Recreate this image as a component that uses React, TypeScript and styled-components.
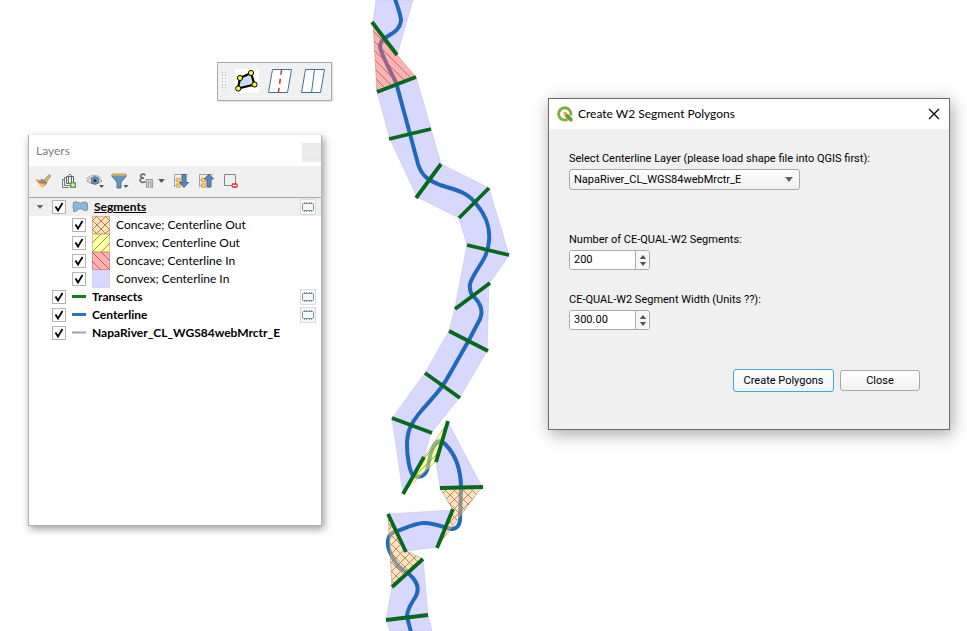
import React, { useId, useState } from "react";
import styled, { createGlobalStyle } from "styled-components";

const GlobalStyle = createGlobalStyle`
  *, *::before, *::after { box-sizing: border-box; }
  body { margin: 0; background: #fff; }
  button, input, select { font: inherit; color: inherit; margin: 0; }
`;

const Desktop = styled.main`
  position: relative;
  min-height: 100vh;
  overflow: hidden;
  color: #000;
  font: 12px/18px Lato, "Open Sans", sans-serif;
`;

const MapCanvas = styled.svg`
  position: absolute;
  inset: 0;
  width: 100%;
  height: 100%;
`;

/* Floating tool bar */
const FloatingToolbar = styled.div`
  position: absolute;
  left: 217px;
  top: 62px;
  display: flex;
  align-items: center;
  gap: 6px;
  height: 39px;
  padding: 0 5px 2px 3px;
  border: 1px solid #a9a9a9;
  background: #f0f0f0;
  box-shadow: 1px 1px 2px #ddd;
`;

const ToolButton = styled.button<{ $size?: number }>`
  display: grid;
  place-items: center;
  width: ${(p) => p.$size ?? 27}px;
  height: ${(p) => p.$size ?? 27}px;
  padding: 0;
  border: 0;
  background: transparent;
`;

const Icon = styled.svg`
  display: block;
`;

/* Layers panel */
const LayersPanel = styled.section`
  position: absolute;
  left: 28px;
  top: 135px;
  width: 294px;
  min-height: 391px;
  display: flex;
  flex-direction: column;
  background: #fff;
  border: 1px solid #b4b4b4;
  border-top: 0;
  box-shadow: 2px 3px 8px rgba(0, 0, 0, 0.4);
`;

const PanelHeader = styled.header`
  display: flex;
  align-items: center;
  justify-content: space-between;
  height: 31px;
  padding-left: 7px;
`;

const PanelTitle = styled.h2`
  margin: 0;
  font-size: 12px;
  font-weight: 400;
  color: #7d7d7d;
`;

const PanelClose = styled.button`
  align-self: flex-end;
  display: grid;
  place-items: center;
  width: 19px;
  height: 19px;
  margin-bottom: 4px;
  padding: 0;
  border: 0;
  background: #ebebeb;
`;

const LayerTools = styled.div`
  display: flex;
  align-items: center;
  gap: 5px;
  height: 31px;
  padding: 0 0 2px 4px;
  background: #f0f0f0;
`;

const ToolGroup = styled.div`
  display: flex;
  align-items: center;
`;

const MenuArrow = styled.button`
  display: grid;
  place-items: center;
  width: 9px;
  height: 20px;
  padding: 0;
  border: 0;
  background: transparent;
`;

const Tree = styled.ul`
  flex: 1;
  margin: 0;
  padding: 0;
  list-style: none;
  border-top: 1px solid #a8a8a8;
`;

const LayerRow = styled.li<{ $level?: number; $active?: boolean }>`
  display: flex;
  align-items: center;
  height: 18px;
  padding-left: ${(p) => (p.$level ? 26 : 6)}px;
  padding-right: 5px;
  background: ${(p) => (p.$active ? "#efefef" : "transparent")};
`;

const Expander = styled.button`
  display: grid;
  place-items: center;
  width: 10px;
  height: 18px;
  padding: 0;
  border: 0;
  background: transparent;
`;

const ExpanderSpace = styled.span`
  width: 10px;
`;

const LayerLabel = styled.label<{ $bold?: boolean; $underline?: boolean }>`
  display: flex;
  flex: 1;
  align-items: center;
  margin-left: 7px;
  line-height: 20px;
  white-space: nowrap;
  font-weight: ${(p) => (p.$bold ? 700 : 400)};
  text-decoration: ${(p) => (p.$underline ? "underline" : "none")};
`;

const CheckWrap = styled.span`
  display: grid;
  margin-right: 6px;

  > * { grid-area: 1 / 1; }
`;

const CheckInput = styled.input`
  appearance: none;
  width: 14px;
  height: 14px;
  border: 1px solid #b4b4b4;
  background: #fff;
`;

const CheckMark = styled(Icon)`
  z-index: 1;
  pointer-events: none;
`;

const Symbol = styled.span<{ $gap: number }>`
  display: block;
  margin-right: ${(p) => p.$gap}px;
`;

const MemoryBadge = styled.span`
  display: grid;
  place-items: center;
  width: 16px;
  height: 16px;
  border: 1px solid #dcdcdc;
  background: #f7f7f7;
`;

/* Dialog */
const Dialog = styled.section`
  position: absolute;
  left: 548px;
  top: 98px;
  width: 402px;
  min-height: 332px;
  border: 1px solid #6b6b6b;
  background: #f0f0f0;
  box-shadow: 2px 4px 16px rgba(0, 0, 0, 0.36);
`;

const TitleBar = styled.header`
  display: flex;
  align-items: center;
  gap: 5px;
  height: 30px;
  padding: 0 9px 0 8px;
  background: #fff;
`;

const DialogTitle = styled.h1`
  flex: 1;
  margin: 0;
  font-size: 12px;
  font-weight: 400;
`;

const DialogForm = styled.form`
  display: flex;
  flex-direction: column;
  gap: 21px;
  padding: 21px 29px 0 20px;
  font: 11px/18px Roboto, "Liberation Sans", sans-serif;
`;

const Field = styled.div<{ $spaced?: boolean }>`
  display: flex;
  flex-direction: column;
  align-items: flex-start;
  gap: 1px;
  margin-bottom: ${(p) => (p.$spaced ? 20 : 0)}px;
`;

const FieldLabel = styled.label`
  white-space: nowrap;
`;

const SelectWrap = styled.div`
  display: grid;
  align-items: center;

  > * { grid-area: 1 / 1; }
`;

const LayerSelect = styled.select`
  appearance: none;
  width: 231px;
  height: 21px;
  padding: 0 20px 0 4px;
  border: 1px solid #a9a9a9;
  border-radius: 3px;
  background: linear-gradient(#fefefe, #f0f0f0);
`;

const SelectArrow = styled(Icon)`
  justify-self: end;
  margin-right: 7px;
  pointer-events: none;
`;

const SpinBox = styled.div`
  display: flex;
  width: 81px;
  height: 20px;
  border: 1px solid #a9a9a9;
  border-radius: 3px;
  background: #fff;
  overflow: hidden;
`;

const SpinInput = styled.input`
  flex: 1;
  min-width: 0;
  padding: 0 4px;
  border: 0;
  background: #fff;
  outline: 0;
`;

const SpinButtons = styled.div`
  display: flex;
  flex-direction: column;
  width: 14px;
  padding: 2px 0;
  border-left: 1px solid #a9a9a9;
  background: #f6f6f6;
`;

const SpinButton = styled.button`
  display: grid;
  flex: 1;
  place-items: center;
  padding: 0;
  border: 0;
  background: transparent;
`;

const Actions = styled.div`
  display: flex;
  justify-content: flex-end;
  align-items: center;
  gap: 6px;
  margin-top: 18px;
`;

const ActionButton = styled.button<{ $primary?: boolean }>`
  width: ${(p) => (p.$primary ? 101 : 80)}px;
  height: ${(p) => (p.$primary ? 23 : 21)}px;
  padding: 0;
  border: 1px solid ${(p) => (p.$primary ? "#45a5e2" : "#a9a9a9")};
  border-radius: 3px;
  background: linear-gradient(#fff, ${(p) => (p.$primary ? "#edf4fa" : "#f0f0f0")});
`;

/* Map data */
const plainPolygons = [
  "376,0 413,0 397,55 373,22",
  "377,92 416,77 431,129 390,139",
  "390,139 431,129 441,164 417,197",
  "417,197 441,164 489,188 459,218",
  "459,218 489,188 509,255 467,245",
  "467,245 509,255 489,284 455,308",
  "455,308 489,284 487,351 449,331",
  "449,331 487,351 460,397 425,373",
  "425,373 460,397 431,433 392,418",
  "392,418 431,433 424,457 403,493",
  "448,422 482,487 440,488 436,461",
  "453,510 388,514 406,551 437,547",
  "392,587 423,559 428,615 386,620",
  "386,620 428,615 432,631 390,631",
];

const hatchedPolygons = [
  { points: "373,22 397,55 416,77 377,92", fill: "#ff6464", hatch: "hatch-red" },
  { points: "403,493 436,461 448,422 424,457", fill: "#ffff50", hatch: "hatch-yellow" },
  { points: "440,488 482,487 437,547 453,510", fill: "#ffc678", hatch: "hatch-orange" },
  { points: "388,514 406,551 423,559 392,587", fill: "#ffc678", hatch: "hatch-orange" },
];

const transects = [
  "M372,22 397,55", "M377,92 416,77", "M389,139 431,129", "M416,198 441,164",
  "M459,218 489,188", "M467,245 509,255", "M490,283 455,309", "M449,331 488,351",
  "M425,373 460,398", "M392,418 432,433", "M403,494 424,457", "M436,462 448,421",
  "M440,488 483,487", "M437,548 453,509", "M388,514 406,552", "M392,587 423,559",
  "M386,620 428,615",
];

const centerline =
  "M395,-1 C398,8 401,15 401,21 C399,33 388,34 382,41 C378,46 381,50 384,58 C392,76 396,80 397,86 " +
  "L410,134 L418,164 C422,177 430,181 440,185 C455,190 467,191 477,205 C488,218 490,232 489,241 " +
  "C488,260 474,270 470,284 C469,292 472,296 476,299 C482,306 483,312 480,319 L469,340 L452,370 " +
  "C443,387 438,392 422,410 C410,424 407,432 407,445 C407,455 409,468 412,474 C415,478 424,478 427,470 " +
  "C430,460 429,454 434,446 C437,440 441,440 445,444 C455,454 461,470 461,488 L460,520 " +
  "C459,529 453,530 447,528 C438,525 432,523 424,523 C413,523 400,531 394,532 C386,536 387,546 390,552 " +
  "C396,566 402,570 409,574 C417,581 420,588 416,596 C411,604 407,610 407,617 L411,632";

function RiverMap() {
  return (
    <MapCanvas viewBox="0 0 967 631" preserveAspectRatio="xMidYMid slice" role="img" aria-label="River segments map">
      <defs>
        <pattern id="hatch-red" width="9" height="9" patternUnits="userSpaceOnUse">
          <path d="M-1,-1 10,10 M-1,8 1,10 M8,-1 10,1" stroke="#a86060" strokeWidth="0.8" />
        </pattern>
        <pattern id="hatch-yellow" width="9" height="9" patternUnits="userSpaceOnUse">
          <path d="M-1,10 10,-1 M-1,1 1,-1 M8,10 10,8" stroke="#8b9444" strokeWidth="0.8" />
        </pattern>
        <pattern id="hatch-orange" width="9" height="9" patternUnits="userSpaceOnUse">
          <path d="M-1,-1 10,10 M-1,10 10,-1" stroke="#9c7a55" strokeWidth="0.8" />
        </pattern>
      </defs>
      <g fill="#d8d8ff" stroke="#c9c4dc" strokeWidth="0.6">
        {plainPolygons.map((points) => <polygon key={points} points={points} />)}
      </g>
      <path d={centerline} fill="none" stroke="#1f69bd" strokeWidth="4" strokeLinejoin="round" />
      {hatchedPolygons.map(({ points, fill, hatch }) => (
        <g key={points}>
          <polygon points={points} fill={fill} fillOpacity="0.5" stroke="#b09888" strokeWidth="0.6" />
          <polygon points={points} fill={`url(#${hatch})`} />
        </g>
      ))}
      <path d={transects.join(" ")} fill="none" stroke="#056a1e" strokeWidth="3.8" />
    </MapCanvas>
  );
}

const Down = ({ w = 8, h = 5, color = "#555" }: { w?: number; h?: number; color?: string }) => (
  <Icon width={w} height={h} viewBox="0 0 8 5" aria-hidden="true"><path d="M0,0H8L4,5Z" fill={color} /></Icon>
);

const Up = ({ w = 8, h = 5 }: { w?: number; h?: number }) => (
  <Icon width={w} height={h} viewBox="0 0 8 5" aria-hidden="true"><path d="M0,5H8L4,0Z" fill="#555" /></Icon>
);

const Swatch = ({ kind }: { kind: string }) => {
  const styles: Record<string, [string, string, string]> = {
    orange: ["#ffe0b5", "#a8835c", "M0,4 14,18 M4,0 18,14 M0,14 14,0 M4,18 18,4 M0,5 5,0 M13,18 18,13 M0,13 5,18 M13,0 18,5"],
    yellow: ["#ffffa8", "#8e9648", "M0,9 9,0 M0,18 18,0 M9,18 18,9"],
    red: ["#ffb0b0", "#b06464", "M0,0 18,18 M9,0 18,9 M0,9 9,18"],
    lilac: ["#d8d8ff", "none", ""],
  };
  const [fill, line, d] = styles[kind];
  return (
    <Icon width="18" height="18" aria-hidden="true">
      <rect width="18" height="18" fill={fill} />
      <path d={d} stroke={line} />
      <rect x="0.5" y="0.5" width="17" height="17" fill="none" stroke={line === "none" ? "#d0cdf0" : line} strokeOpacity="0.4" />
    </Icon>
  );
};

const LineSymbol = ({ color, width }: { color: string; width: number }) => (
  <Icon width="14" height="18" aria-hidden="true"><path d="M0,8.5H14" stroke={color} strokeWidth={width} /></Icon>
);

const Checkbox = ({ id }: { id: string }) => (
  <CheckWrap>
    <CheckInput type="checkbox" id={id} defaultChecked />
    <CheckMark width="14" height="14" viewBox="0 0 14 14" aria-hidden="true">
      <path d="M3.5,6.5 L6,10.5 L10.5,3" fill="none" stroke="#000" strokeWidth="1.8" />
    </CheckMark>
  </CheckWrap>
);

const Memory = () => (
  <MemoryBadge title="Temporary layer">
    <Icon width="14" height="12" viewBox="0 0 14 12" aria-hidden="true">
      <path d="M3.5,1V11 M5.5,1V11 M8.5,1V11 M10.5,1V11" stroke="#8b98a0" />
      <rect x="1.5" y="2.5" width="11" height="7" rx="1" fill="#f4f8fa" stroke="#78909c" />
    </Icon>
  </MemoryBadge>
);

interface Layer { name: string; level?: number; symbol: React.ReactNode; gap: number; memory?: boolean; active?: boolean }

const layers: Layer[] = [
  {
    name: "Segments", gap: 5, memory: true, active: true,
    symbol: (
      <Icon width="17" height="14" viewBox="0 0 17 14" aria-hidden="true">
        <path d="M1.5,2.5 Q4,1 6,2.5 Q9,4 12,2 Q15,1.5 15.5,4 Q16,7 15,10.5 Q12,11 10,9 Q8,8 6,9.5 Q4,12 1.5,11.5 Q2,9 1,7 Z" fill="#8bb5da" stroke="#6b95b8" />
      </Icon>
    ),
  },
  { name: "Concave; Centerline Out", level: 1, gap: 6, symbol: <Swatch kind="orange" /> },
  { name: "Convex; Centerline Out", level: 1, gap: 6, symbol: <Swatch kind="yellow" /> },
  { name: "Concave; Centerline In", level: 1, gap: 6, symbol: <Swatch kind="red" /> },
  { name: "Convex; Centerline In", level: 1, gap: 6, symbol: <Swatch kind="lilac" /> },
  { name: "Transects", gap: 6, memory: true, symbol: <LineSymbol color="#118014" width={3} /> },
  { name: "Centerline", gap: 6, memory: true, symbol: <LineSymbol color="#2a76b4" width={3} /> },
  { name: "NapaRiver_CL_WGS84webMrctr_E", gap: 6, symbol: <LineSymbol color="#a79fb2" width={2} /> },
];

const treeGlyph = (
  <>
    <path d="M1,1.5H15 M1.5,2V14 M1.5,7H5 M1.5,12.5H5" stroke="#a3a3a3" fill="none" />
    <path d="M4,5.5h3v3h-3z M4,11h3v3h-3z" fill="#fff" stroke="#e8a33c" strokeWidth="1.4" />
  </>
);

function LayersDock() {
  const prefix = useId();
  return (
    <LayersPanel aria-label="Layers">
      <PanelHeader>
        <PanelTitle>Layers</PanelTitle>
        <PanelClose aria-label="Close panel">
          <Icon width="6" height="6" viewBox="0 0 6 6"><path d="M1,1 5,5 M5,1 1,5" stroke="#f6f6f6" /></Icon>
        </PanelClose>
      </PanelHeader>
      <LayerTools>
        <ToolButton $size={20} aria-label="Open styling panel">
          <Icon width="16" height="16" viewBox="0 0 16 16">
            <path d="M8.5,7.5 14,1.5 16,3 11,9.5Z" fill="#d9b06a" stroke="#9d7a43" strokeWidth="0.6" />
            <path d="M6.5,5.5 12.5,9.5 11,11.5 5,7.5Z" fill="#7c8c96" />
            <path d="M1,6.5 5,7.5 11,11.5 7,14.5Z" fill="#e6503e" />
            <path d="M3,10 8,10.5 10,12 7,14.5Z" fill="#f8c843" />
            <path d="M1,6.5 4.5,7 6.5,9 3,9.2Z" fill="#f28b50" />
          </Icon>
        </ToolButton>
        <ToolButton $size={22} aria-label="Add group">
          <Icon width="16" height="16" viewBox="0 0 16 16">
            <path d="M1.5,6.5V14.5H8 M1.5,6.5H3.5 M3.5,4.5V12.5H10 M3.5,4.5H6" fill="none" stroke="#6f7d78" />
            <path d="M5.5,3.5H12.5V10.5H5.5Z M7.5,10V2.5 Q9,-0.5 10.5,2.5V10" fill="none" stroke="#596864" />
            <rect x="9" y="9" width="6" height="6" rx="1" fill="#5ea34f" />
            <path d="M12,10V14 M10,12H14" stroke="#fff" />
          </Icon>
        </ToolButton>
        <ToolButton $size={20} aria-label="Manage map themes">
          <Icon width="20" height="16" viewBox="0 0 20 16">
            <path d="M2,8 Q9,0 17,8 Q10,14 2,8Z" fill="#f4f4f4" stroke="#8b9398" />
            <path d="M1,6 Q9,-1 16,5" fill="none" stroke="#a7a7a7" />
            <circle cx="10" cy="7.5" r="3.8" fill="#6e96ba" stroke="#50708b" />
            <circle cx="10" cy="7.5" r="1.6" fill="#24384a" />
            <path d="M14,12h5l-2.5,3z" fill="#555" />
          </Icon>
        </ToolButton>
        <ToolButton $size={20} aria-label="Filter legend">
          <Icon width="18" height="16" viewBox="0 0 18 16">
            <path d="M1,2 15,2 15,3.5 10,9 10,15 6,15 6,9 1,3.5Z" fill="#6594bc" stroke="#44759c" />
            <path d="M1,1H15V3H1Z" fill="#e8c355" stroke="#93865a" strokeWidth="0.7" />
            <path d="M12.5,12h5l-2.5,3z" fill="#555" />
          </Icon>
        </ToolButton>
        <ToolGroup>
          <ToolButton $size={22} aria-label="Filter legend by expression">
            <Icon width="16" height="16" viewBox="0 0 16 16">
              <path d="M7.5,2 Q4,0 2.5,2.5 Q2.5,5 6,5 Q2,5.2 1.8,7.5 Q3,10.5 7.5,8.8" fill="none" stroke="#6d626f" strokeWidth="1.5" />
              <path d="M8,6.5H14.5V14.5H12.5V9.5H10.5V14.5H8.5Z" fill="#c8c8c8" stroke="#8e8e8e" strokeWidth="0.8" />
            </Icon>
          </ToolButton>
          <MenuArrow aria-label="Expression filter options"><Down w={7} h={4} /></MenuArrow>
        </ToolGroup>
        <ToolButton $size={20} aria-label="Expand all">
          <Icon width="16" height="16" viewBox="0 0 16 16">
            {treeGlyph}
            <path d="M9,1.5H13V9.5H15.5L11,14.5L6.5,9.5H9Z" fill="#5a89bd" stroke="#3c658e" />
          </Icon>
        </ToolButton>
        <ToolButton $size={20} aria-label="Collapse all">
          <Icon width="16" height="16" viewBox="0 0 16 16">
            {treeGlyph}
            <path d="M9,14H13V6H15.5L11,1L6.5,6H9Z" fill="#5a89bd" stroke="#3c658e" />
          </Icon>
        </ToolButton>
        <ToolButton $size={20} aria-label="Remove layer">
          <Icon width="16" height="16" viewBox="0 0 16 16">
            <path d="M1.5,1.5H12.5V12.5H1.5Z" fill="none" stroke="#7d8783" />
            <rect x="8.5" y="10" width="6.5" height="5" rx="2" fill="#e0525b" />
            <path d="M10,12.5H13.5" stroke="#fff" />
          </Icon>
        </ToolButton>
      </LayerTools>
      <Tree>
        {layers.map((layer) => {
          const id = prefix + layer.name;
          return (
            <LayerRow key={layer.name} $level={layer.level} $active={layer.active}>
              {layer.active ? <Expander aria-label="Collapse Segments"><Down w={8} h={4} color="#666" /></Expander> : <ExpanderSpace />}
              <LayerLabel htmlFor={id} $bold={!layer.level} $underline={layer.active}>
                <Checkbox id={id} />
                <Symbol $gap={layer.gap}>{layer.symbol}</Symbol>
                {layer.name}
              </LayerLabel>
              {layer.memory && <Memory />}
            </LayerRow>
          );
        })}
      </Tree>
    </LayersPanel>
  );
}

function PluginToolbar() {
  return (
    <FloatingToolbar role="toolbar" aria-label="Segment tools">
      <Icon width="6" height="20" viewBox="0 0 6 20" aria-hidden="true">
        <path d="M1.5,1V20 M4.5,1V20" stroke="#b8c0c8" strokeDasharray="1 2" />
      </Icon>
      <ToolButton aria-label="Create segment polygons">
        <Icon width="24" height="24" viewBox="0 0 24 24">
          <rect width="24" height="24" fill="#fff" />
          <path d="M5,9 16,4 19.5,15.5 3,19.5Z" fill="#cbdcf7" stroke="#000" strokeWidth="2.2" />
          <g fill="#f8f23a" stroke="#000">
            <circle cx="5" cy="9" r="2.6" /><circle cx="16" cy="4" r="2.6" />
            <circle cx="19.5" cy="15.5" r="2.6" /><circle cx="3.2" cy="19.5" r="2.6" />
          </g>
        </Icon>
      </ToolButton>
      <ToolButton aria-label="Centerline">
        <Icon width="24" height="26" viewBox="0 0 24 26">
          <path d="M4.5,1.5H23.5L19.5,24.5H0.5Z" fill="#fff" stroke="#426f99" />
          <path d="M13.5,2 10.5,24" stroke="#e32929" strokeWidth="1.5" strokeDasharray="5 4" />
        </Icon>
      </ToolButton>
      <ToolButton aria-label="Transects">
        <Icon width="24" height="26" viewBox="0 0 24 26">
          <path d="M4.5,1.5H23.5L19.5,24.5H0.5Z M13.5,1.5 10.5,24.5" fill="#fff" stroke="#426f99" />
        </Icon>
      </ToolButton>
    </FloatingToolbar>
  );
}

function Spin({ id, initial, digits }: { id: string; initial: number; digits: number }) {
  const [value, setValue] = useState(initial.toFixed(digits));
  const step = (by: number) => setValue((Number(value) + by).toFixed(digits));
  return (
    <SpinBox>
      <SpinInput id={id} inputMode="decimal" value={value} onChange={(e) => setValue(e.target.value)} />
      <SpinButtons>
        <SpinButton type="button" aria-label="Increase" onClick={() => step(1)}><Up h={4} /></SpinButton>
        <SpinButton type="button" aria-label="Decrease" onClick={() => step(-1)}><Down h={4} /></SpinButton>
      </SpinButtons>
    </SpinBox>
  );
}

function SegmentDialog() {
  return (
    <Dialog role="dialog" aria-labelledby="dialog-title">
      <TitleBar>
        <Icon width="16" height="16" viewBox="0 0 16 16" aria-hidden="true">
          <path d="M10.5,13.3 A6.1,6.1 0 1 1 13.6,9.5" fill="none" stroke="#7eae3c" strokeWidth="2.8" />
          <path d="M8,8H11L15.5,12.5V15.5H13L8,10.5Z" fill="#6b9d38" />
          <path d="M6.5,6H9.5L10,8 8,9.5 6.5,8.5Z" fill="#ee9a42" />
        </Icon>
        <DialogTitle id="dialog-title">Create W2 Segment Polygons</DialogTitle>
        <ToolButton $size={12} aria-label="Close dialog">
          <Icon width="12" height="12" viewBox="0 0 12 12"><path d="M1,1 11,11 M11,1 1,11" stroke="#000" strokeWidth="1.2" /></Icon>
        </ToolButton>
      </TitleBar>
      <DialogForm onSubmit={(e) => e.preventDefault()}>
        <Field $spaced>
          <FieldLabel htmlFor="centerline">Select Centerline Layer (please load shape file into QGIS first):</FieldLabel>
          <SelectWrap>
            <LayerSelect id="centerline"><option>NapaRiver_CL_WGS84webMrctr_E</option></LayerSelect>
            <SelectArrow width="8" height="5" viewBox="0 0 8 5" aria-hidden="true"><path d="M0,0H8L4,5Z" fill="#666" /></SelectArrow>
          </SelectWrap>
        </Field>
        <Field>
          <FieldLabel htmlFor="segments">Number of CE-QUAL-W2 Segments:</FieldLabel>
          <Spin id="segments" initial={200} digits={0} />
        </Field>
        <Field>
          <FieldLabel htmlFor="width">CE-QUAL-W2 Segment Width (Units ??):</FieldLabel>
          <Spin id="width" initial={300} digits={2} />
        </Field>
        <Actions>
          <ActionButton $primary type="submit">Create Polygons</ActionButton>
          <ActionButton type="button">Close</ActionButton>
        </Actions>
      </DialogForm>
    </Dialog>
  );
}

export default function App() {
  return (
    <>
      <GlobalStyle />
      <Desktop>
        <RiverMap />
        <PluginToolbar />
        <LayersDock />
        <SegmentDialog />
      </Desktop>
    </>
  );
}
